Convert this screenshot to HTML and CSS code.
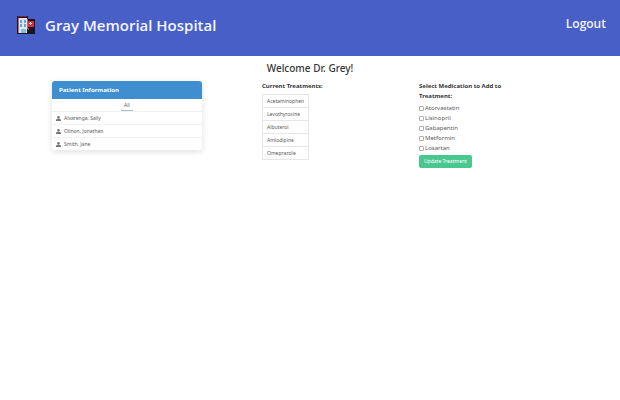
FILE: index.html
```html
<!DOCTYPE html>
<html lang="en">
<head>
<meta charset="utf-8">
<meta name="viewport" content="width=device-width, initial-scale=1">
<title>Gray Memorial Hospital</title>
<link rel="stylesheet" href="styles.css">
</head>
<body>
<header class="hero">
  <svg class="logo" viewBox="0 0 18 18" aria-hidden="true">
    <path fill="#1c1420" d="M0 0h11v3h7v15H0z"/>
    <path fill="#7a2038" d="M1 0h9v1H1z"/>
    <path fill="#e4e2ec" d="M2 2h8v15H2z"/>
    <path fill="#d85a66" d="M1 2h1v15H1zM10 3h1v10h-1z"/>
    <path fill="#43b4dc" d="M3 4h2v3H3zM7 4h2v3H7zM3 8h2v3H3zM7 8h2v3H7z"/>
    <path fill="#6fc8de" d="M4 13h5v4H4z"/>
    <path fill="#d3303f" d="M11 5h6v6h-6z"/>
    <path fill="#f3c4cc" d="M13 6h1v1h1v1h-1v1h-1V8h-1V7h1z"/>
    <path fill="#1c1420" d="M11 11h6v6h-6z"/>
    <path fill="#c84650" d="M11 12h1v2h-1z"/>
  </svg>
  <h1 class="hero-title">Gray Memorial Hospital</h1>
  <a class="logout" href="#">Logout</a>
</header>
<main>
  <h2 class="welcome">Welcome Dr. Grey!</h2>
  <div class="columns">
    <section class="panel">
      <h3 class="panel-heading">Patient Information</h3>
      <nav class="tabs"><a class="tab" href="#">All</a></nav>
      <a class="patient" href="#"><svg class="user" viewBox="0 0 10 10" aria-hidden="true"><circle cx="5" cy="2.8" r="2.6"/><path d="M0 10V8q0-2 2.500-2h5Q10 6 10 8v2z"/></svg>Alvarenga, Sally</a>
      <a class="patient" href="#"><svg class="user" viewBox="0 0 10 10" aria-hidden="true"><circle cx="5" cy="2.8" r="2.6"/><path d="M0 10V8q0-2 2.500-2h5Q10 6 10 8v2z"/></svg>Olinon, Jonathan</a>
      <a class="patient" href="#"><svg class="user" viewBox="0 0 10 10" aria-hidden="true"><circle cx="5" cy="2.8" r="2.6"/><path d="M0 10V8q0-2 2.500-2h5Q10 6 10 8v2z"/></svg>Smith, Jane</a>
    </section>
    <section>
      <h3 class="label">Current Treatments:</h3>
      <table class="treatments">
        <tbody>
          <tr><td>Acetaminophen</td></tr>
          <tr><td>Levothyroxine</td></tr>
          <tr><td>Albuterol</td></tr>
          <tr><td>Amlodipine</td></tr>
          <tr><td>Omeprazole</td></tr>
        </tbody>
      </table>
    </section>
    <form class="medication">
      <h3 class="label">Select Medication to Add to Treatment:</h3>
      <label class="option"><input class="check" type="checkbox">Atorvastatin</label>
      <label class="option"><input class="check" type="checkbox">Lisinopril</label>
      <label class="option"><input class="check" type="checkbox">Gabapentin</label>
      <label class="option"><input class="check" type="checkbox">Metformin</label>
      <label class="option"><input class="check" type="checkbox">Losartan</label>
      <button class="update" type="button">Update Treatment</button>
    </form>
  </div>
</main>
</body>
</html>
```
FILE: styles.css
```css
* {
  box-sizing: border-box;
}

body {
  margin: 0;
  background: #fff;
  color: #5a5a5a;
  font: 6px/10px "Noto Sans", "Open Sans", sans-serif;
}

h1,
h2,
h3 {
  margin: 0;
}

a {
  color: inherit;
  text-decoration: none;
}

.hero {
  display: flex;
  align-items: center;
  padding: 13px 14px 19px 17px;
  background: #485fc7;
  color: #f3f5ff;
}

.logo {
  width: 18px;
  height: 18px;
  margin-right: 10px;
}

.hero-title {
  font-family: "Open Sans", "Noto Sans", sans-serif;
  font-size: 15px;
  font-weight: 600;
  line-height: 24px;
}

.logout {
  margin: 0 0 2px auto;
  font-family: "Open Sans", "Noto Sans", sans-serif;
  font-size: 12px;
  font-weight: 600;
  line-height: 20px;
}

.welcome {
  padding: 6px 0;
  color: #363636;
  font-size: 10px;
  font-weight: 500;
  line-height: 13px;
  text-align: center;
}

.columns {
  display: grid;
  grid-template-columns: 150fr 97fr 96fr;
  align-items: start;
  gap: 60px;
  padding: 0 105px 0 52px;
}

.panel {
  border-radius: 3px;
  box-shadow: 0 2px 6px rgba(10, 10, 10, 0.12);
  font-size: 5px;
}

.panel-heading {
  padding: 4px 7px;
  border-radius: 3px 3px 0 0;
  background: #3e8ed0;
  color: #fff;
  font-size: 6px;
  font-weight: 700;
  line-height: 10px;
}

.tabs {
  display: flex;
  justify-content: center;
}

.tab {
  padding: 1px 3px 0;
  border-bottom: 1px solid #a3bfd8;
}

.patient {
  display: flex;
  align-items: center;
  padding: 1px 4px;
  border-top: 1px solid #f2f2f2;
  line-height: 10px;
}

.user {
  width: 5px;
  height: 5px;
  margin-right: 3px;
  fill: #777;
}

.label {
  color: #363636;
  font-size: 6px;
  font-weight: 700;
  line-height: 10px;
}

.treatments {
  margin-top: 3px;
  border-collapse: collapse;
  font-size: 5px;
}

.treatments td {
  padding: 1px 4px;
  border: 1px solid #e6e6e6;
}

.medication {
  display: flex;
  flex-direction: column;
  align-items: flex-start;
}

.medication .label {
  margin-bottom: 2px;
}

.option {
  display: flex;
  align-items: center;
  gap: 1px;
}

.check {
  appearance: none;
  width: 5px;
  height: 5px;
  margin: 0;
  border: 1px solid #b0b0b0;
  border-radius: 1px;
  background: #fff;
}

.check:checked {
  background: #485fc7;
}

.update {
  margin-top: 2px;
  padding: 2px 5px;
  border: 0;
  border-radius: 2px;
  background: #48c78e;
  color: #fff;
  font: 5px/9px "Noto Sans", "Open Sans", sans-serif;
}
```
